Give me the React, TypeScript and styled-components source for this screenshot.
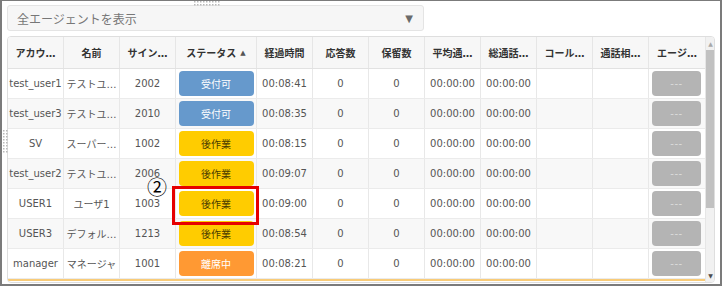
import React from "react";
import styled, { createGlobalStyle } from "styled-components";

const GlobalStyle = createGlobalStyle`
  html, body {
    margin: 0;
    padding: 0;
    background: #ffffff;
  }
  body {
    font-family: "DejaVu Sans", "Noto Sans CJK JP", sans-serif;
  }
`;

const FONT = `"DejaVu Sans", "Noto Sans CJK JP", sans-serif`;

const Frame = styled.div`
  position: relative;
  width: 722px;
  height: 286px;
  box-sizing: border-box;
  border: 2px solid #7b7b7b;
  border-top-width: 1px;
  padding: 4px 6px 0 5px;
  background: #fff;
  overflow: hidden;
`;

const SelectBox = styled.div`
  width: 417px;
  height: 26px;
  box-sizing: border-box;
  border: 1px solid #e4e4e4;
  border-radius: 3px;
  background: #f6f6f6;
  display: flex;
  align-items: center;
  justify-content: space-between;
  padding: 0 10px 0 9px;
  font-family: ${FONT};
  font-size: 12px;
  color: #777;
`;

const SelectArrow = styled.span`
  font-size: 10px;
  color: #6a6a6a;
`;

const Table = styled.div`
  margin-top: 5px;
  width: 708px;
  height: 247px;
  box-sizing: border-box;
  border: 1px solid #dedede;
  border-radius: 4px;
  display: flex;
  overflow: hidden;
  font-family: ${FONT};
`;

const Body = styled.div`
  width: 697px;
  display: flex;
  flex-direction: column;
`;

const COLS = "56px 56px 56px 81px 56px 56px 56px 56px 56px 56px 56px 56px";

const HeaderRow = styled.div`
  display: grid;
  grid-template-columns: ${COLS};
  height: 31px;
  background: #f7f7f7;
  border-bottom: 1px solid #e2e2e2;
`;

const HeadCell = styled.div`
  display: flex;
  align-items: center;
  justify-content: center;
  border-right: 1px solid #e6e6e6;
  font-size: 10px;
  font-weight: bold;
  color: #333;
  white-space: nowrap;
  overflow: hidden;
  &:last-child {
    border-right: none;
  }
`;

const SortMark = styled.span`
  font-size: 7px;
  color: #555;
  margin-left: 4px;
`;

const Row = styled.div<{ $alt: boolean }>`
  display: grid;
  grid-template-columns: ${COLS};
  height: 29px;
  border-bottom: 1px solid #ebebeb;
  background: ${(p) => (p.$alt ? "#f8f8f8" : "#ffffff")};
`;

const Cell = styled.div`
  display: flex;
  align-items: center;
  justify-content: center;
  border-right: 1px solid #e8e8e8;
  font-size: 10px;
  color: #555;
  white-space: nowrap;
  overflow: hidden;
  &:last-child {
    border-right: none;
  }
`;

const STATUS = {
  ready: { bg: "#6699cc", fg: "#ffffff" },
  after: { bg: "#ffcc00", fg: "#4a3a00" },
  away: { bg: "#ff9933", fg: "#ffffff" },
};

type StatusKind = keyof typeof STATUS;

const StatusButton = styled.div<{ $kind: StatusKind }>`
  width: 75px;
  height: 25px;
  border-radius: 4px;
  display: flex;
  align-items: center;
  justify-content: center;
  font-size: 10px;
  background: ${(p) => STATUS[p.$kind].bg};
  color: ${(p) => STATUS[p.$kind].fg};
`;

const AgentButton = styled.div`
  width: 49px;
  height: 25px;
  margin-left: -1px;
  border-radius: 4px;
  background: #b4b4b4;
  color: #dcdcdc;
  font-size: 10px;
  letter-spacing: 0.5px;
  display: flex;
  align-items: center;
  justify-content: center;
`;

const FooterLine = styled.div`
  height: 2px;
  background: #f8cb78;
`;

const Scrollbar = styled.div`
  width: 10px;
  background: #f1f1f1;
  border-left: 1px solid #e6e6e6;
  display: flex;
  flex-direction: column;
  align-items: center;
`;

const ScrollArrow = styled.div<{ $dark: boolean }>`
  height: 13px;
  display: flex;
  align-items: center;
  justify-content: center;
  font-size: 6px;
  color: ${(p) => (p.$dark ? "#4d4d4d" : "#a8a8a8")};
`;

const ScrollThumb = styled.div`
  width: 9px;
  height: 158px;
  background: #c1c1c1;
`;

const ScrollSpace = styled.div`
  flex: 1;
`;

const Highlight = styled.div`
  position: absolute;
  left: 170px;
  top: 185px;
  width: 87px;
  height: 39px;
  box-sizing: border-box;
  border: 3px solid #e60000;
`;

const Marker = styled.div`
  position: absolute;
  left: 145px;
  top: 179px;
  font-family: "Noto Sans CJK JP", sans-serif;
  font-size: 20px;
  line-height: 14px;
  color: #000;
`;

const TopGrip = styled.svg`
  position: absolute;
  left: 192px;
  top: 0px;
`;

const SideGrip = styled.svg`
  position: absolute;
  left: 1px;
  top: 129px;
`;

const headers = [
  "アカウ…",
  "名前",
  "サイン…",
  "ステータス",
  "経過時間",
  "応答数",
  "保留数",
  "平均通…",
  "総通話…",
  "コール…",
  "通話相…",
  "エージ…",
];

type Agent = {
  account: string;
  name: string;
  sign: string;
  status: StatusKind;
  elapsed: string;
};

const agents: Agent[] = [
  { account: "test_user1", name: "テストユ…", sign: "2002", status: "ready", elapsed: "00:08:41" },
  { account: "test_user3", name: "テストユ…", sign: "2010", status: "ready", elapsed: "00:08:35" },
  { account: "SV", name: "スーパー…", sign: "1002", status: "after", elapsed: "00:08:15" },
  { account: "test_user2", name: "テストユ…", sign: "2006", status: "after", elapsed: "00:09:07" },
  { account: "USER1", name: "ユーザ1", sign: "1003", status: "after", elapsed: "00:09:00" },
  { account: "USER3", name: "デフォル…", sign: "1213", status: "after", elapsed: "00:08:54" },
  { account: "manager", name: "マネージャ", sign: "1001", status: "away", elapsed: "00:08:21" },
];

const statusLabel: Record<StatusKind, string> = {
  ready: "受付可",
  after: "後作業",
  away: "離席中",
};

const dots = (cols: number, rows: number) => {
  const out: React.ReactNode[] = [];
  for (let r = 0; r < rows; r++) {
    for (let c = 0; c < cols; c++) {
      out.push(<rect key={`${r}-${c}`} x={c * 3} y={r * 3} width={1.5} height={1.5} fill="#b9b9b9" />);
    }
  }
  return out;
};

const App: React.FC = () => {
  return (
    <Frame>
      <GlobalStyle />
      <TopGrip width="26" height="5">{dots(9, 2)}</TopGrip>
      <SideGrip width="5" height="24">{dots(2, 8)}</SideGrip>
      <SelectBox>
        <span>全エージェントを表示</span>
        <SelectArrow>▼</SelectArrow>
      </SelectBox>
      <Table>
        <Body>
          <HeaderRow>
            {headers.map((h) => (
              <HeadCell key={h}>
                {h}
                {h === "ステータス" && <SortMark>▲</SortMark>}
              </HeadCell>
            ))}
          </HeaderRow>
          {agents.map((a, i) => (
            <Row key={a.account} $alt={i % 2 === 1}>
              <Cell>{a.account}</Cell>
              <Cell>{a.name}</Cell>
              <Cell>{a.sign}</Cell>
              <Cell>
                <StatusButton $kind={a.status}>{statusLabel[a.status]}</StatusButton>
              </Cell>
              <Cell>{a.elapsed}</Cell>
              <Cell>0</Cell>
              <Cell>0</Cell>
              <Cell>00:00:00</Cell>
              <Cell>00:00:00</Cell>
              <Cell />
              <Cell />
              <Cell>
                <AgentButton>---</AgentButton>
              </Cell>
            </Row>
          ))}
          <FooterLine />
        </Body>
        <Scrollbar>
          <ScrollArrow $dark={false}>▲</ScrollArrow>
          <ScrollThumb />
          <ScrollSpace />
          <ScrollArrow $dark={true}>▼</ScrollArrow>
        </Scrollbar>
      </Table>
      <Marker>②</Marker>
      <Highlight />
    </Frame>
  );
};

export default App;
